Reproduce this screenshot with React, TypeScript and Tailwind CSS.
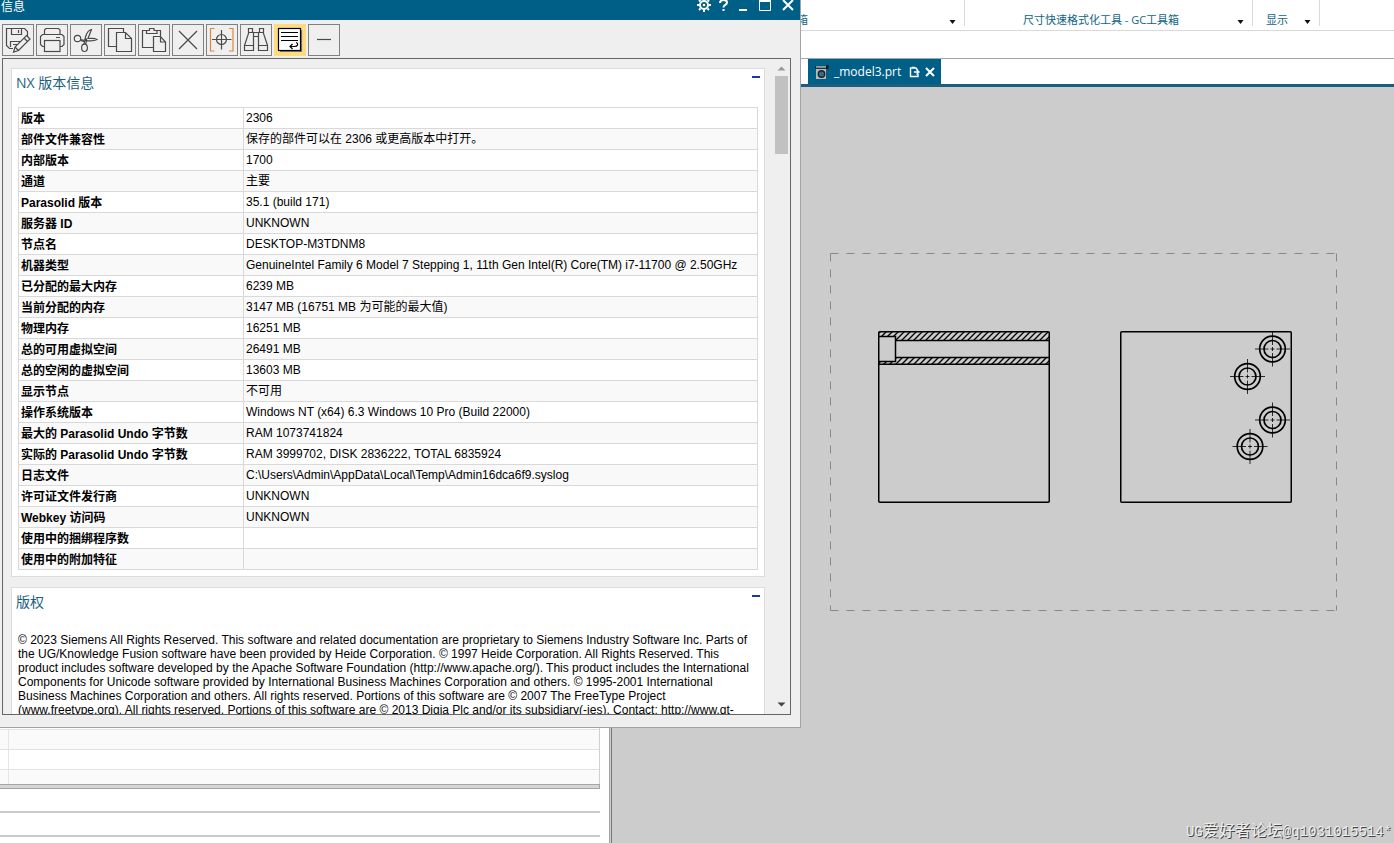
import React from 'react'

const cjk = 'font-["Liberation_Sans","Noto_Sans_CJK_SC",sans-serif]'
const ui = 'font-["Open_Sans","Noto_Sans_CJK_SC",sans-serif]'

const rows = [
  ['版本', '2306'],
  ['部件文件兼容性', '保存的部件可以在 2306 或更高版本中打开。'],
  ['内部版本', '1700'],
  ['通道', '主要'],
  ['Parasolid 版本', '35.1 (build 171)'],
  ['服务器 ID', 'UNKNOWN'],
  ['节点名', 'DESKTOP-M3TDNM8'],
  ['机器类型', 'GenuineIntel Family 6 Model 7 Stepping 1, 11th Gen Intel(R) Core(TM) i7-11700 @ 2.50GHz'],
  ['已分配的最大内存', '6239 MB'],
  ['当前分配的内存', '3147 MB (16751 MB 为可能的最大值)'],
  ['物理内存', '16251 MB'],
  ['总的可用虚拟空间', '26491 MB'],
  ['总的空闲的虚拟空间', '13603 MB'],
  ['显示节点', '不可用'],
  ['操作系统版本', 'Windows NT (x64) 6.3 Windows 10 Pro (Build 22000)'],
  ['最大的 Parasolid Undo 字节数', 'RAM 1073741824'],
  ['实际的 Parasolid Undo 字节数', 'RAM 3999702, DISK 2836222, TOTAL 6835924'],
  ['日志文件', 'C:\\Users\\Admin\\AppData\\Local\\Temp\\Admin16dca6f9.syslog'],
  ['许可证文件发行商', 'UNKNOWN'],
  ['Webkey 访问码', 'UNKNOWN'],
  ['使用中的捆绑程序数', ''],
  ['使用中的附加特征', ''],
]

const tools = [
  {
    name: 'save',
    art: (
      <>
        <path d="M11 24.5H7.5L4.5 21.5V4.5H22.5L25.5 7.5V12M9.5 4.5V10.5H19.5V4.5M16.5 6V9M8.5 23V17.5H18M11 20.5H15M21.5 17L24 14.5" />
        <path d="M24.5 11.5L28 15L16.5 26.5L11.5 28L13 23ZM22 14L25.5 17.5M13 23L16.5 26.5" fill="#efefef" />
      </>
    ),
  },
  {
    name: 'print',
    art: (
      <>
        <path d="M8.5 22.5H6.5L4.5 20.5V12.5L6.5 10.5H26L28 12.5V20.5L26 22.5H24M8.5 10.5V6L10 4.5H22.5L24 6V10.5M20 13.5H24" />
        <rect x="8.5" y="16.5" width="15.5" height="11" />
      </>
    ),
  },
  {
    name: 'cut',
    art: (
      <>
        <circle cx="7.5" cy="14.5" r="3.2" />
        <ellipse cx="14.5" cy="23.8" rx="2.9" ry="3.7" />
        <path d="M10.5 15.5L15 16.5C21 17 24 17.5 27 15.5C24 13.5 21 14.5 18 14.5L21.5 5.5C18 6 16.5 9.5 15.5 13L14 20M10.5 16.5L14 17.5M16.5 17L15.5 20.5" />
        <circle cx="16" cy="15.5" r="0.6" />
      </>
    ),
  },
  {
    name: 'copy',
    art: (
      <>
        <path d="M12 22.5H4.5V4.5H19.5V8" />
        <path d="M12.5 8.5H21.5L27.5 14.5V27.5H12.5ZM21.5 8.5V14.5H27.5" />
      </>
    ),
  },
  {
    name: 'paste',
    art: (
      <>
        <path d="M15 23.5H4.5V6.5H8.5M19 6.5H22.5V12M8.5 9.5V6.5H11.5V4.5H16V6.5H19V9.5Z" />
        <path d="M15.5 12.5H22.5L27.5 18V27.5H15.5ZM22.5 12.5V18H27.5" />
      </>
    ),
  },
  { name: 'delete', art: <path d="M7 7L25 25M25 7L7 25" /> },
  {
    name: 'center',
    art: (
      <>
        <path d="M8.5 4.5H4.5V27H8.5M23 4.5H27V27H23" stroke="#d98a3c" />
        <circle cx="15.5" cy="15.5" r="5" />
        <path d="M15.5 6V25.5M6 15.5H25.5" />
      </>
    ),
  },
  {
    name: 'find',
    art: (
      <path d="M4.5 21.5H13.5V26.5H4.5ZM18.5 21.5H27.5V26.5H18.5ZM4.5 21.5L8.5 9.5V8.5H13.5V21.5M27.5 21.5L23.500 9.5V8.5H18.5V21.5M8.5 8.5V4.5H12.5V8.5M19.5 8.5V4.5H23.5V8.5M13.5 8.5H18.5M13.5 12.5H18.5" />
    ),
  },
  {
    name: 'wrap',
    on: true,
    art: (
      <>
        <path d="M27.5 6V27.5H6" stroke="#777" />
        <rect x="4.5" y="4.5" width="22" height="22" fill="#fff" stroke="#000" />
        <path d="M7 8.5H24M7 12.5H24M7 16.5H24" stroke="#000" strokeWidth="1" />
        <path d="M22 18.5Q24 19 23.500 21Q23 22.500 20.5 22.500H16M18.5 20L16 22.5L18.5 25" stroke="#000" />
      </>
    ),
  },
  { name: 'line', art: <path d="M9 15.5H23" /> },
]

const holes = [
  [1272.5, 349],
  [1247.5, 376.5],
  [1272.5, 420],
  [1250, 446.5],
]

const Caret = () => (
  <svg width="7" height="4" viewBox="0 0 7 4" aria-hidden="true">
    <path d="M0.5 0H6.5L3.5 4Z" fill="#111" />
  </svg>
)

const Ribbon = () => (
  <div className={`${ui} flex h-[31px] shrink-0 border-b border-[#d9d9d9] bg-white text-[11px] leading-4 text-[#0f6482]`}>
    <div className="flex w-[965px]">
      <span className="flex-1 pt-3 pr-[141px] text-right">箱</span>
      <button aria-label="更多" className="pt-[14px]"><Caret /></button>
      <div className="ml-2 h-[26px] w-px bg-[#d9d9d9]" />
    </div>
    <div className="flex w-[288px]">
      <span className="flex-1 pt-3 text-center">尺寸快速格式化工具 - GC工具箱</span>
      <button aria-label="更多" className="pt-[14px]"><Caret /></button>
      <div className="ml-2 h-[26px] w-px bg-[#d9d9d9]" />
    </div>
    <div className="flex w-[67px]">
      <span className="flex-1 pt-3 pl-[13px]">显示</span>
      <button aria-label="更多" className="pt-[14px]"><Caret /></button>
      <div className="ml-2 h-[26px] w-px bg-[#d9d9d9]" />
    </div>
  </div>
)

const PartTabs = () => (
  <div className="flex h-7 shrink-0 items-start border-b-3 border-[#1c5f7d] bg-white pl-[808px]">
    <div className={`${ui} flex h-[25px] w-[133px] items-center bg-[#005f87] pl-[7px] text-xs text-white`}>
      <svg width="14" height="16" viewBox="0 0 14 16" aria-hidden="true">
        <path d="M0 3.5H12M12.5 1V5" stroke="#111" strokeWidth="2" />
        <path d="M1 3H11" stroke="#fff" />
        <path d="M1 5H11V15H1Z" fill="#b9b9b9" />
        <circle cx="6.5" cy="10" r="3.2" fill="#2f6f8f" stroke="#222" strokeWidth="1.4" />
      </svg>
      <span className="ml-[5px] w-[70px]">_model3.prt</span>
      <svg className="ml-[5px]" width="11" height="12" viewBox="0 0 11 12" fill="none" stroke="#fff" strokeWidth="1.4" aria-hidden="true">
        <path d="M7 10.5H1.5V2H7L8.5 4M3 1.5H6M9 8V10.5H5" />
        <path d="M5 6H9M7.5 3.5L10 6L7.500 8.5" />
      </svg>
      <button aria-label="关闭" className="ml-[5px]">
        <svg width="10" height="10" viewBox="0 0 10 10" stroke="#fff" strokeWidth="2">
          <path d="M1 1L9 9M9 1L1 9" />
        </svg>
      </button>
    </div>
  </div>
)

const SidePanel = () => (
  <div className="flex w-[43.9%] shrink-0 border-r border-[#777] bg-[#ccc]">
    <div className="mr-px flex flex-1 flex-col border-r border-[#a5a5a5] bg-white pr-[9px]">
      <div className="flex flex-1 border-r border-[#d0d0d0]">
        <div className="flex flex-1 flex-col justify-end">
          <div className="h-5 border-t border-[#e2e2e2] bg-[#fafafa] pl-2"><div className="h-full border-l border-[#e6e6e6]" /></div>
          <div className="h-5 border-t border-[#e2e2e2] pl-2"><div className="h-full border-l border-[#e6e6e6]" /></div>
          <div className="h-[15px] border-t border-[#e2e2e2] bg-[#fafafa] pl-2"><div className="h-full border-l border-[#e6e6e6]" /></div>
        </div>
      </div>
      <div className="h-[5px] border border-l-0 border-[#a5a5a5] bg-[#d6d6d6]" />
      <div className="mt-[22px] h-[2px] bg-[#ccc]" />
      <div className="mt-[22px] mb-[6px] h-[2px] bg-[#ccc]" />
    </div>
  </div>
)

const Drawing = () => (
  <svg className="h-full w-full" viewBox="612 87 782 756" preserveAspectRatio="xMinYMin" fill="none" stroke="#000" aria-hidden="true">
    <defs>
      <pattern id="hatch" width="6" height="6" patternUnits="userSpaceOnUse">
        <path d="M-1 7L7 -1M-1 1L1 -1M5 7L7 5" stroke="#000" strokeWidth="1.3" />
      </pattern>
    </defs>
    <path d="M830.5 253.5H1336.5M830.5 610.5H1336.5" stroke="#888" strokeDasharray="8 8" />
    <path d="M830.5 253.5V610.5M1336.5 253.5V610.5" stroke="#888" strokeDasharray="8 8" />
    <g stroke="none" fill="url(#hatch)">
      <rect x="879" y="332" width="17" height="4" />
      <rect x="896" y="332" width="153" height="8" />
      <rect x="896" y="358" width="153" height="6" />
      <rect x="879" y="362" width="17" height="2" />
    </g>
    <g strokeWidth="1.5">
      <rect x="878.75" y="331.75" width="170.5" height="170.5" rx="1" />
      <path d="M896 340.5H1049M896 357.5H1049M879 364.25H1049" />
      <path d="M879 336.5H895.5V361.5H879" />
      <rect x="1120.75" y="331.75" width="170.5" height="170.5" rx="1" />
    </g>
    {holes.map(([x, y]) => (
      <g key={y} transform={`translate(${x} ${y})`}>
        <circle r="12.8" strokeWidth="1.7" />
        <circle r="8.5" strokeWidth="1.7" />
        <path d="M-17.5 0H-4M-2 0H2M4 0H17.5M0 -17.5V-4M0 -2V2M0 4V17.5" strokeWidth="0.8" />
      </g>
    ))}
  </svg>
)

const Card = ({ title, children }: { title: string; children: React.ReactNode }) => (
  <section className="border border-[#dcdcdc] bg-white">
    <header className="flex h-[38px] items-start justify-between pr-1 pl-1">
      <h2 className={`${ui} pt-1 text-sm leading-5 text-[#1c5f7d]`}>{title}</h2>
      <button aria-label={`折叠 ${title}`} className="pt-[7px]">
        <span className="block h-[2px] w-2 bg-[#1a3a9c]" />
      </button>
    </header>
    {children}
  </section>
)

const InfoWindow = () => (
  <div role="dialog" aria-label="信息" className={`${cjk} absolute top-0 bottom-[115px] left-0 flex w-[57.46%] flex-col border-r border-b border-[#a3a3a3] bg-[#efefef] text-black`}>
    <div className="flex h-5 shrink-0 items-start justify-between bg-[#005f87] pr-[6px] text-white">
      <h1 className={`${ui} pl-px text-xs leading-[14px]`}>信息</h1>
      <div className="flex gap-2">
        <button aria-label="设置">
          <svg width="14" height="12" viewBox="0 0 14 12" fill="none" stroke="#fff">
            <circle cx="7" cy="5" r="4" strokeWidth="2" />
            <circle cx="7" cy="5" r="1.3" fill="#fff" stroke="none" />
            <path d="M7 0V-2M7 9V12M2 5H0M12 5H14M3.5 1.5L2 0M10.5 1.5L12 0M3.5 8.5L2 10M10.5 8.5L12 10" strokeWidth="2" />
          </svg>
        </button>
        <button aria-label="帮助">
          <svg width="9" height="12" viewBox="0 0 9 12" fill="none" stroke="#fff" strokeWidth="2">
            <path d="M1 3Q1 0 4.5 0Q8 0 8 2.5Q8 4 6 5Q4.5 6 4.5 7.5M4.5 9V11" />
          </svg>
        </button>
        <button aria-label="最小化" className="ml-[3px]">
          <svg width="9" height="12" viewBox="0 0 9 12" stroke="#fff" strokeWidth="2">
            <path d="M0 10H8" />
          </svg>
        </button>
        <button aria-label="最大化" className="ml-[3px]">
          <svg width="12" height="12" viewBox="0 0 12 12" fill="none" stroke="#fff">
            <path d="M0.5 0V10.5H11.5V0" />
            <path d="M0 1H12" strokeWidth="2" />
          </svg>
        </button>
        <button aria-label="关闭" className="ml-[3px]">
          <svg width="12" height="12" viewBox="0 0 12 12" stroke="#fff" strokeWidth="2">
            <path d="M1 0L11 10M11 0L1 10" />
          </svg>
        </button>
      </div>
    </div>

    <div className="flex shrink-0 gap-[2px] pt-1 pb-[2px] pl-[2px]">
      {tools.map((t) => (
        <button key={t.name} aria-label={t.name} className={t.on ? 'size-8 bg-[#fcdc7c]' : 'size-8 shadow-[inset_0_0_0_1px_#808080]'}>
          <svg width="32" height="32" viewBox="0 0 32 32" fill="none" stroke="#4a4a4a" strokeWidth="1.2">{t.art}</svg>
        </button>
      ))}
    </div>

    <div className="mr-[9px] mb-3 ml-[2px] flex min-h-0 flex-1 border border-[#666]">
      <div className="flex min-w-0 flex-1 flex-col gap-[10px] overflow-hidden pt-[9px] pr-[10px] pl-2">
        <Card title="NX 版本信息">
          <div className="px-[6px] pb-[6px]">
            <table className="w-full table-fixed border-collapse text-left text-xs">
              <tbody>
                {rows.map(([label, value]) => (
                  <tr key={label} className="h-[21px] even:bg-[#f9f9f9]">
                    <th className="w-[225px] border border-[#d9d9d9] px-[2px] pt-[2px] pb-0 leading-4 font-bold whitespace-nowrap">{label}</th>
                    <td className="border border-[#d9d9d9] px-[2px] py-0 leading-4">{value}</td>
                  </tr>
                ))}
              </tbody>
            </table>
          </div>
        </Card>
        <Card title="版权">
          <p className="px-[6px] pt-[7px] pb-6 text-xs leading-[14px]">
            © 2023 Siemens All Rights Reserved. This software and related documentation are proprietary to Siemens Industry
            Software Inc. Parts of the UG/Knowledge Fusion software have been provided by Heide Corporation. © 1997 Heide
            Corporation. All Rights Reserved. This product includes software developed by the Apache Software Foundation
            (http://www.apache.org/). This product includes the International Components for Unicode software provided by
            International Business Machines Corporation and others. © 1995-2001 International Business Machines Corporation
            and others. All rights reserved. Portions of this software are © 2007 The FreeType Project (www.freetype.org). All
            rights reserved. Portions of this software are © 2013 Digia Plc and/or its subsidiary(-ies). Contact:
            http://www.qt-
          </p>
        </Card>
      </div>
      <div className="flex w-[15px] shrink-0 flex-col pt-[7px] pb-[7px]">
        <svg width="13" height="10" viewBox="0 0 13 10" aria-hidden="true"><path d="M2.5 4.5L6.5 0.5L10.5 4.5Z" fill="#999" /></svg>
        <div className="h-[78px] w-[13px] bg-[#c1c1c1]" />
        <svg className="mt-auto" width="13" height="5" viewBox="0 0 13 5" aria-hidden="true"><path d="M2.5 0.5H10.5L6.5 4.5Z" fill="#444" /></svg>
      </div>
    </div>
  </div>
)

const App = () => {
  return (
    <main className="relative flex h-screen flex-col overflow-hidden bg-[#ccc]">
      <Ribbon />
      <div className="h-7 shrink-0 border-b border-[#a5a5a5] bg-white" />
      <PartTabs />
      <div className="flex min-h-0 flex-1">
        <SidePanel />
        <div className="min-w-0 flex-1">
          <Drawing />
        </div>
      </div>
      <InfoWindow />
      <div className='absolute right-[2px] bottom-0 font-["Liberation_Mono","Noto_Sans_CJK_SC",monospace] text-sm leading-[22px] text-[#eee] [text-shadow:1px_1px_0_#444]'>
        UG<span className="text-base leading-[22px]">爱好者论坛</span>@q1031015514*
      </div>
    </main>
  )
}

export default App
